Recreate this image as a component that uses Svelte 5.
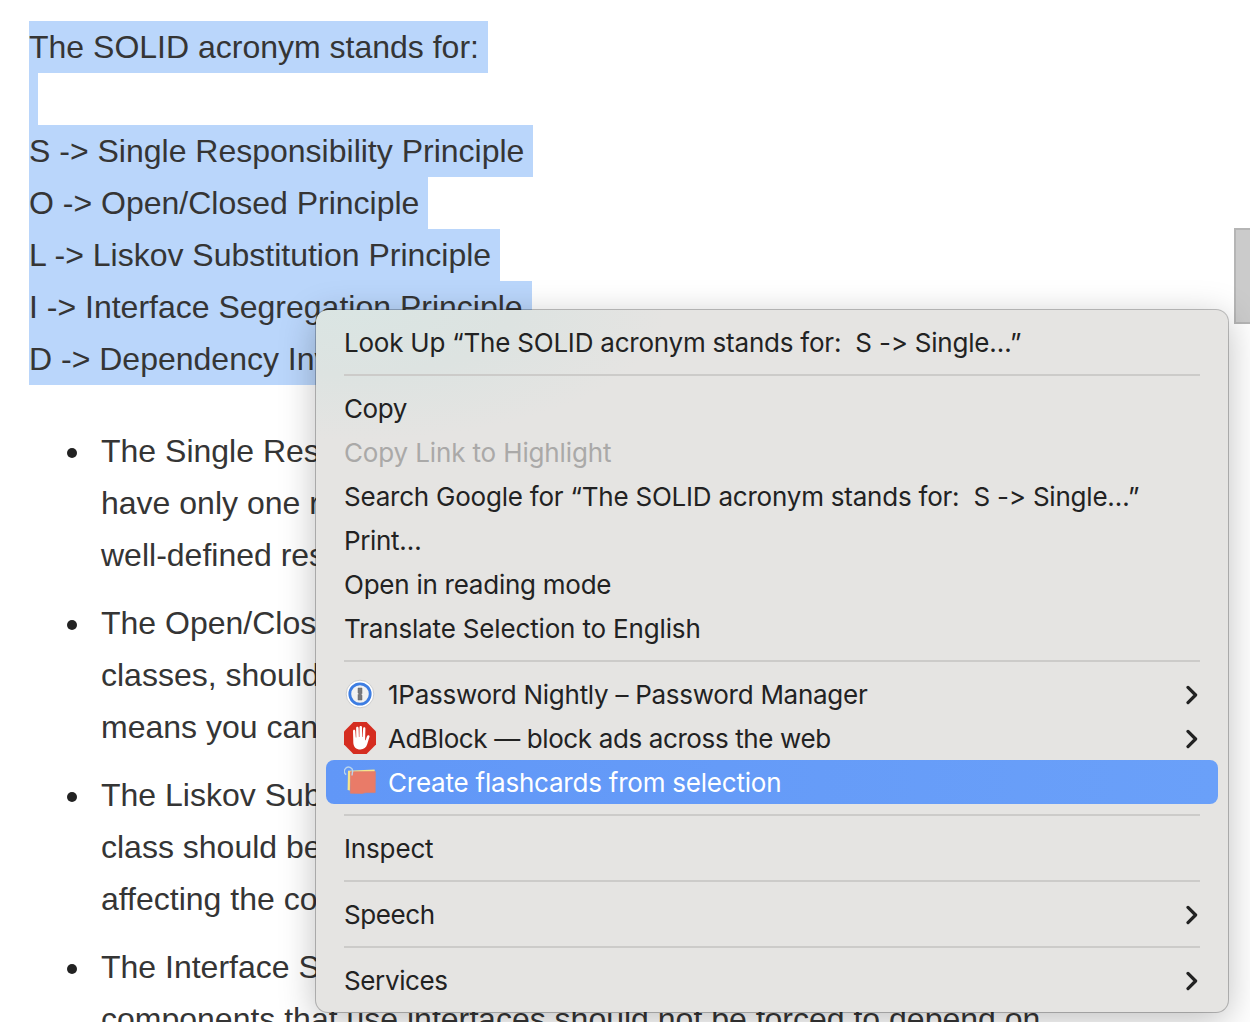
<script>
  const selected = [
    'The SOLID acronym stands for:',
    '',
    'S -> Single Responsibility Principle',
    'O -> Open/Closed Principle',
    'L -> Liskov Substitution Principle',
    'I -> Interface Segregation Principle',
    'D -> Dependency Inversion'
  ];

  const principles = [
    ['The Single Responsibility', 'have only one reason', 'well-defined responsibility'],
    ['The Open/Closed', 'classes, should', 'means you can'],
    ['The Liskov Substitution', 'class should be', 'affecting the code'],
    ['The Interface Segregation', 'components that use interfaces should not be forced to depend on']
  ];

  // track: letter spacing of the label, in pixels
  const groups = [
    [{ label: 'Look Up “The SOLID acronym stands for:  S -> Single…”', track: -0.22 }],
    [
      { label: 'Copy', track: -0.45 },
      { label: 'Copy Link to Highlight', track: -0.14, disabled: true },
      { label: 'Search Google for “The SOLID acronym stands for:  S -> Single…”', track: -0.22 },
      { label: 'Print…', track: -0.35 },
      { label: 'Open in reading mode', track: -0.25 },
      { label: 'Translate Selection to English', track: -0.16 }
    ],
    [
      { label: '1Password Nightly – Password Manager', track: -0.27, icon: 'password', more: true },
      { label: 'AdBlock — block ads across the web', track: -0.38, icon: 'adblock', more: true },
      { label: 'Create flashcards from selection', track: -0.22, icon: 'cards', active: true }
    ],
    [{ label: 'Inspect', track: -0.15 }],
    [{ label: 'Speech', track: -0.4, more: true }],
    [{ label: 'Services', track: -0.38, more: true }]
  ];
</script>

<main class="page">
  <article>
    <div class="selection">
      {#each selected as line}
        <div class="line"><span class="mark">{line + ' '}</span></div>
      {/each}
    </div>
    <ul>
      {#each principles as lines}
        <li>
          {#each lines as line}
            <div class="line">{line}</div>
          {/each}
        </li>
      {/each}
    </ul>
  </article>

  <div class="scroll-thumb"></div>

  <div class="menu" role="menu">
    {#each groups as group, g}
      {#if g > 0}<div class="separator"></div>{/if}
      {#each group as item}
        <div class="item" class:disabled={item.disabled} class:active={item.active} role="menuitem" tabindex="-1">
          {#if item.icon}
            <svg class="icon" viewBox="0 0 32 32" width="32" height="32">
              {#if item.icon === 'password'}
                <circle cx="16" cy="16" r="13.8" fill="#fff" stroke="#c2c2c2" stroke-width=".8" />
                <circle cx="16" cy="16" r="10.2" fill="#f1f1f1" stroke="#3d7de2" stroke-width="2.8" />
                <path d="M14 10h4v5.4l-.9.9.9.9V22h-4v-5.3l.9-.9-.9-.9z" fill="#77787c" stroke="#66676b" stroke-width=".5" />
              {:else if item.icon === 'adblock'}
                <path d="M9.4 0h13.2L32 9.4v13.2L22.6 32H9.4L0 22.6V9.4z" fill="#d52d20" />
                <path
                  d="M9 9.2c0-1.8 2.2-1.8 2.3 0l.5 6.3h.5l-.2-9.3c0-1.8 2.4-1.8 2.5 0l.3 8.8h.5l.1-9.8c0-1.7 2.5-1.7 2.5 0l.1 9.8h.5l.5-8.4c.1-1.7 2.4-1.6 2.3.1l-.3 11.6h.5l1.3-3.9c.5-1.6 3.1-1.4 2.6.4l-2.3 7.5c-1 3.3-3.3 5.2-6.8 5.2-4.5 0-6.8-2.7-7.1-6.8z"
                  fill="#fff"
                />
              {:else}
                <path d="M4 4.8 30.6 3.6 31 8 7 10 6 24.5 3.6 24z" fill="#f6e58b" />
                <path d="M6.5 5.8 31.4 5.6 31.2 26.6 22 26.6 18 27.4 6.3 27.2z" fill="#e97b68" stroke="#dc806f" stroke-width=".7" />
                <path d="M2.2 8.6A4.1 4.1 0 1 1 8.4 6.5L8 9.5" fill="none" stroke="#bbd5ec" stroke-width="1.4" />
              {/if}
            </svg>
          {/if}
          <span class="label" style:letter-spacing="{item.track}px">{item.label}</span>
          {#if item.more}
            <svg class="chevron" viewBox="0 0 12 20" width="12" height="20">
              <path d="M2 2.4 9.6 10 2 17.6" fill="none" stroke="#222" stroke-width="3.2" stroke-linecap="round" stroke-linejoin="round" />
            </svg>
          {/if}
        </div>
      {/each}
    {/each}
  </div>
</main>

<style>
  :global(body) {
    margin: 0;
    background: #fff;
  }
  .page {
    position: relative;
    width: 1250px;
    height: 1022px;
    overflow: hidden;
    box-sizing: border-box;
    padding: 21px 0 0 29px;
    color: #353535;
    font: 32px/52px 'Liberation Sans', Arial, sans-serif;
  }
  .line {
    height: 52px;
    white-space: pre;
  }
  .mark {
    display: inline-block;
    height: 52px;
    background: #bad6fb;
  }
  ul {
    list-style: none;
    margin: 40px 0 0;
    padding: 0 0 0 72px;
  }
  li {
    position: relative;
    margin-bottom: 16px;
  }
  li::before {
    content: '';
    position: absolute;
    left: -34px;
    top: 23px;
    width: 10px;
    height: 10px;
    border-radius: 50%;
    background: #222;
  }
  .scroll-thumb {
    position: absolute;
    left: 1234px;
    top: 228px;
    width: 20px;
    height: 96px;
    box-sizing: border-box;
    border: 2px solid #b5b5b5;
    background: #cbcbcb;
  }
  .menu {
    position: absolute;
    left: 316px;
    top: 310px;
    width: 912px;
    height: 702px;
    box-sizing: border-box;
    padding: 10px;
    border-radius: 12px;
    background: radial-gradient(ellipse 310px 130px at 40px 0, #dae5e3 0, #dde3e1 50%, #e5e4e2 100%) #e5e4e2;
    box-shadow:
      0 0 0 1px rgba(0, 0, 0, 0.24),
      0 8px 36px rgba(0, 0, 0, 0.26);
    color: #222;
    font: 26px/44px Inter, sans-serif;
    font-feature-settings: 'calt' 0;
  }
  .item {
    display: flex;
    align-items: center;
    height: 44px;
    box-sizing: border-box;
    padding: 0 20px 0 18px;
    border-radius: 8px;
    white-space: pre;
  }
  .label {
    flex: 1;
    padding-top: 2px;
  }
  .disabled {
    color: #aaa9a8;
  }
  .active {
    background: linear-gradient(90deg, #6197f7, #6aa0f9);
    color: #fff;
  }
  .icon {
    flex: none;
    margin-right: 12px;
  }
  .chevron {
    flex: none;
    margin-top: 2px;
  }
  .separator {
    height: 2px;
    margin: 10px 18px;
    background: #cccbc9;
  }
</style>
